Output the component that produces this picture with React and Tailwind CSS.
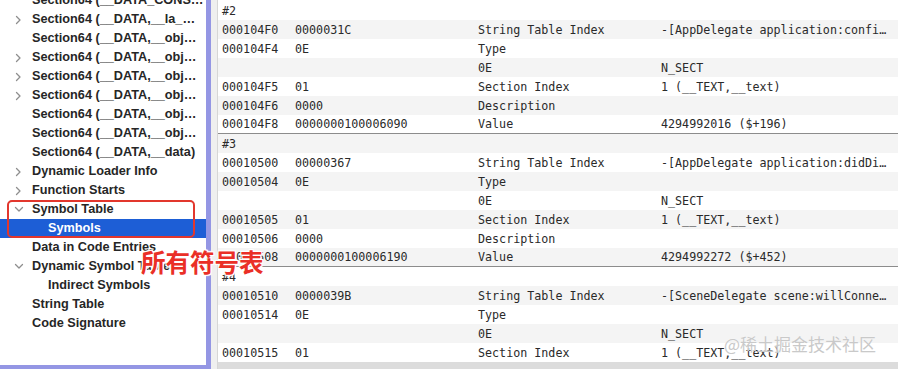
import React from "react";

const sideItems = [
  { t: "Section64 (__DATA_CONS…", c: null, i: 0 },
  { t: "Section64 (__DATA,__la_…", c: "r", i: 0 },
  { t: "Section64 (__DATA,__obj…", c: null, i: 0 },
  { t: "Section64 (__DATA,__obj…", c: "r", i: 0 },
  { t: "Section64 (__DATA,__obj…", c: "r", i: 0 },
  { t: "Section64 (__DATA,__obj…", c: "r", i: 0 },
  { t: "Section64 (__DATA,__obj…", c: null, i: 0 },
  { t: "Section64 (__DATA,__obj…", c: null, i: 0 },
  { t: "Section64 (__DATA,__data)", c: null, i: 0 },
  { t: "Dynamic Loader Info", c: "r", i: 0 },
  { t: "Function Starts", c: "r", i: 0 },
  { t: "Symbol Table", c: "d", i: 0 },
  { t: "Symbols", c: null, i: 1, sel: true },
  { t: "Data in Code Entries", c: null, i: 0 },
  { t: "Dynamic Symbol Table", c: "d", i: 0 },
  { t: "Indirect Symbols", c: null, i: 1 },
  { t: "String Table", c: null, i: 0 },
  { t: "Code Signature", c: null, i: 0 },
];

const rows = [
  ["#2", "", "", ""],
  ["000104F0", "0000031C", "String Table Index", "-[AppDelegate application:confi…"],
  ["000104F4", "0E", "Type", ""],
  ["", "", "0E", "N_SECT"],
  ["000104F5", "01", "Section Index", "1 (__TEXT,__text)"],
  ["000104F6", "0000", "Description", ""],
  ["000104F8", "0000000100006090", "Value", "4294992016 ($+196)", true],
  ["#3", "", "", ""],
  ["00010500", "00000367", "String Table Index", "-[AppDelegate application:didDi…"],
  ["00010504", "0E", "Type", ""],
  ["", "", "0E", "N_SECT"],
  ["00010505", "01", "Section Index", "1 (__TEXT,__text)"],
  ["00010506", "0000", "Description", ""],
  ["00010508", "0000000100006190", "Value", "4294992272 ($+452)", true],
  ["#4", "", "", ""],
  ["00010510", "0000039B", "String Table Index", "-[SceneDelegate scene:willConne…"],
  ["00010514", "0E", "Type", ""],
  ["", "", "0E", "N_SECT"],
  ["00010515", "01", "Section Index", "1 (__TEXT,__text)"],
];

function Chevron({ dir }) {
  if (dir === "r")
    return (
      <svg width="7" height="10" viewBox="0 0 7 10" className="block">
        <polyline points="1.5,1.5 5,5 1.5,8.5" fill="none" stroke="#8e8e8e" strokeWidth="1.3" strokeLinecap="round" strokeLinejoin="round" />
      </svg>
    );
  return (
    <svg width="10" height="7" viewBox="0 0 10 7" className="block">
      <polyline points="1.5,1.5 5,5 8.5,1.5" fill="none" stroke="#8e8e8e" strokeWidth="1.3" strokeLinecap="round" strokeLinejoin="round" />
    </svg>
  );
}

export default function App() {
  return (
    <div className="relative flex h-[369px] w-[898px] overflow-hidden bg-[#ececec]">
      {/* Sidebar */}
      <div className="flex h-full w-[211px] shrink-0 flex-col overflow-hidden border-b-[4px] border-r-[5px] border-[#9496e4] bg-white">
        <div className="-mt-[9px] flex flex-col">
          {sideItems.map((it, k) => (
            <div
              key={k}
              className={
                "flex h-[19px] items-center whitespace-nowrap font-['Liberation_Sans',Arial,sans-serif] text-[12.7px] font-bold " +
                (it.sel ? "bg-[#1d5ed6] text-white" : "text-[#262626]")
              }
            >
              <div className="flex w-[32px] shrink-0 items-center justify-center pl-[5px]">
                {it.c ? <Chevron dir={it.c} /> : null}
              </div>
              <span className={it.i ? "pl-[16px]" : ""}>{it.t}</span>
            </div>
          ))}
        </div>
      </div>

      {/* splitter */}
      <div className="w-[6px] shrink-0 bg-[#efefef]" />

      {/* Table */}
      <div className="flex h-full flex-1 flex-col border-l border-[#d6d6d6]">
        <div className="flex flex-col bg-white pt-[1px]">
          {rows.map((r, k) => (
            <div
              key={k}
              className={
                "box-border flex h-[19px] items-center whitespace-nowrap pt-[2px] font-['DejaVu_Sans_Mono',monospace] text-[11.7px] text-[#2a2a2a] " +
                (k % 2 === 1 ? "bg-[#f4f4f4] " : "bg-white ") +
                (r[4] ? "border-b border-[#8c8c8c]" : "")
              }
            >
              <span className="w-[77px] shrink-0 pl-[4px]">{r[0]}</span>
              <span className="w-[183px] shrink-0">{r[1]}</span>
              <span className="w-[183px] shrink-0">{r[2]}</span>
              <span className="shrink-0">{r[3]}</span>
            </div>
          ))}
        </div>
        <div className="flex-1 bg-[#dcdcdc]" />
      </div>

      {/* Red annotation box */}
      <div className="absolute left-[7px] top-[200px] h-[38px] w-[188px] rounded-[5px] border-2 border-[#e2372d]" />

      {/* Red annotation text */}
      <div className="absolute left-[141px] top-[248px] font-['Noto_Sans_CJK_SC',sans-serif] text-[24.5px] font-bold leading-[28px] text-[#ea2f27] [text-shadow:0_0_2px_#fff,0_0_2px_#fff,0_0_3px_#fff,1px_1px_0_#fff,-1px_-1px_0_#fff,1px_-1px_0_#fff,-1px_1px_0_#fff]">
        所有符号表
      </div>

      {/* watermark */}
      <div className="absolute left-[724px] top-[333px] font-['Noto_Sans_CJK_SC',sans-serif] text-[17px] leading-[22px] text-[#c9c9c9] [text-shadow:0_0_1px_#fff]">
        @稀土掘金技术社区
      </div>
    </div>
  );
}
